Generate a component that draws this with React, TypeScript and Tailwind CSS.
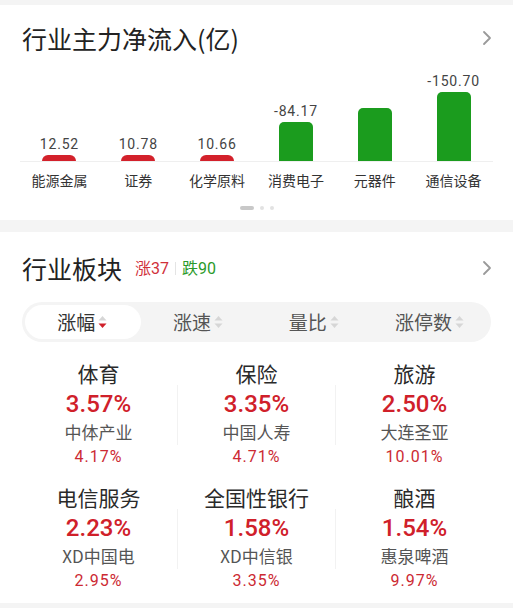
import React from "react";

const cjk = { fontFamily: '"Noto Sans CJK SC", "Noto Sans", sans-serif' };
const num = { fontFamily: 'Roboto, "Noto Sans CJK SC", sans-serif' };

const flows = [
  { name: "能源金属", value: "12.52", h: 6, up: true },
  { name: "证券", value: "10.78", h: 6, up: true },
  { name: "化学原料", value: "10.66", h: 6, up: true },
  { name: "消费电子", value: "-84.17", h: 39, up: false },
  { name: "元器件", value: "", h: 53, up: false },
  { name: "通信设备", value: "-150.70", h: 69, up: false },
];

const sectors = [
  [
    { name: "体育", pct: "3.57%", stock: "中体产业", sp: "4.17%" },
    { name: "保险", pct: "3.35%", stock: "中国人寿", sp: "4.71%" },
    { name: "旅游", pct: "2.50%", stock: "大连圣亚", sp: "10.01%" },
  ],
  [
    { name: "电信服务", pct: "2.23%", stock: "XD中国电", sp: "2.95%" },
    { name: "全国性银行", pct: "1.58%", stock: "XD中信银", sp: "3.35%" },
    { name: "酿酒", pct: "1.54%", stock: "惠泉啤酒", sp: "9.97%" },
  ],
];

const tabs = ["涨幅", "涨速", "量比", "涨停数"];

const Chevron = () => (
  <svg width="12" height="18" viewBox="0 0 12 18" fill="none">
    <path d="M3 3l6 6-6 6" stroke="#9a9a9a" strokeWidth="1.8" strokeLinecap="round" strokeLinejoin="round" />
  </svg>
);

const SortIcon = ({ active }: { active: boolean }) => (
  <svg width="11" height="16" viewBox="0 0 11 16" className="ml-[2px]">
    <path d="M5.5 2L9.5 6.5H1.5z" fill="#d6d6d6" />
    <path d="M5.5 14L9.5 9.5H1.5z" fill={active ? "#d0202a" : "#d6d6d6"} />
  </svg>
);

const SectorCell = ({ s }: { s: (typeof sectors)[0][0] }) => (
  <div className="flex-1 flex flex-col items-center">
    <div className="h-[28px] leading-[28px] text-[21px] text-[#2a2a2a]" style={cjk}>
      {s.name}
    </div>
    <div className="h-[34px] leading-[34px] text-[24px] font-medium text-[#d0202a]" style={num}>
      {s.pct}
    </div>
    <div className="h-[22px] leading-[22px] text-[17px] text-[#555]" style={cjk}>
      {s.stock}
    </div>
    <div className="h-[28px] leading-[28px] text-[16px] text-[#cc2a33] tracking-[1px]" style={num}>
      {s.sp}
    </div>
  </div>
);

export default function App() {
  return (
    <div className="w-[513px] h-[608px] bg-[#f4f4f4] pt-[5px] flex flex-col gap-[12px] overflow-hidden" style={cjk}>
      {/* 主力净流入 */}
      <div className="bg-white h-[215px] flex flex-col">
        <div className="flex items-center justify-between pl-[22px] pr-[20px] pt-[19px]">
          <div className="text-[25px] leading-[28px] text-[#222]">行业主力净流入(亿)</div>
          <Chevron />
        </div>
        <div className="mx-[20px] mt-[8px] h-[102px] flex items-end border-b border-[#efefef]">
          {flows.map((f) => (
            <div key={f.name} className="flex-1 flex flex-col items-center justify-end">
              <div className="text-[14px] leading-[16px] text-[#444] mb-[3px] tracking-[0.8px]" style={num}>
                {f.value}
              </div>
              <div
                className={
                  f.up
                    ? "w-[34px] rounded-t-[6px] bg-[#d3212b]"
                    : "w-[34px] rounded-t-[5px] bg-[#1b9c1e]"
                }
                style={{ height: f.h }}
              />
            </div>
          ))}
        </div>
        <div className="mx-[20px] mt-[8px] flex">
          {flows.map((f) => (
            <div key={f.name} className="flex-1 text-center text-[14px] leading-[20px] text-[#333]">
              {f.name}
            </div>
          ))}
        </div>
        <div className="mt-[16px] flex justify-center items-center gap-[6px]">
          <div className="w-[14px] h-[4px] rounded-full bg-[#c8c8c8]" />
          <div className="w-[4px] h-[4px] rounded-full bg-[#e2e2e2]" />
          <div className="w-[4px] h-[4px] rounded-full bg-[#e2e2e2]" />
        </div>
      </div>

      {/* 行业板块 */}
      <div className="bg-white h-[371px] flex flex-col">
        <div className="flex items-center justify-between pl-[22px] pr-[20px] pt-[22px]">
          <div className="flex items-center">
            <div className="text-[25px] leading-[28px] text-[#222]">行业板块</div>
            <div className="ml-[13px] text-[16px] text-[#d0303a]">
              涨<span style={num}>37</span>
            </div>
            <div className="mx-[6px] w-px h-[13px] bg-[#e4e4e4]" />
            <div className="text-[16px] text-[#2a9a2a]">
              跌<span style={num}>90</span>
            </div>
          </div>
          <Chevron />
        </div>

        <div className="mx-[22px] mt-[20px] h-[40px] rounded-full bg-[#f4f4f4] p-[3px] flex">
          {tabs.map((t, i) => (
            <div
              key={t}
              className={
                i === 0
                  ? "flex-1 rounded-full bg-white flex items-center justify-center text-[19px] text-[#333]"
                  : "flex-1 rounded-full flex items-center justify-center text-[19px] text-[#555]"
              }
            >
              {t}
              <SortIcon active={i === 0} />
            </div>
          ))}
        </div>

        <div className="mt-[17px] px-[20px] flex flex-col gap-[12px]">
          {sectors.map((row, ri) => (
            <div key={ri} className="flex items-center">
              <SectorCell s={row[0]} />
              <div className="w-px h-[60px] bg-[#f2f2f2]" />
              <SectorCell s={row[1]} />
              <div className="w-px h-[60px] bg-[#f2f2f2]" />
              <SectorCell s={row[2]} />
            </div>
          ))}
        </div>
      </div>
    </div>
  );
}
